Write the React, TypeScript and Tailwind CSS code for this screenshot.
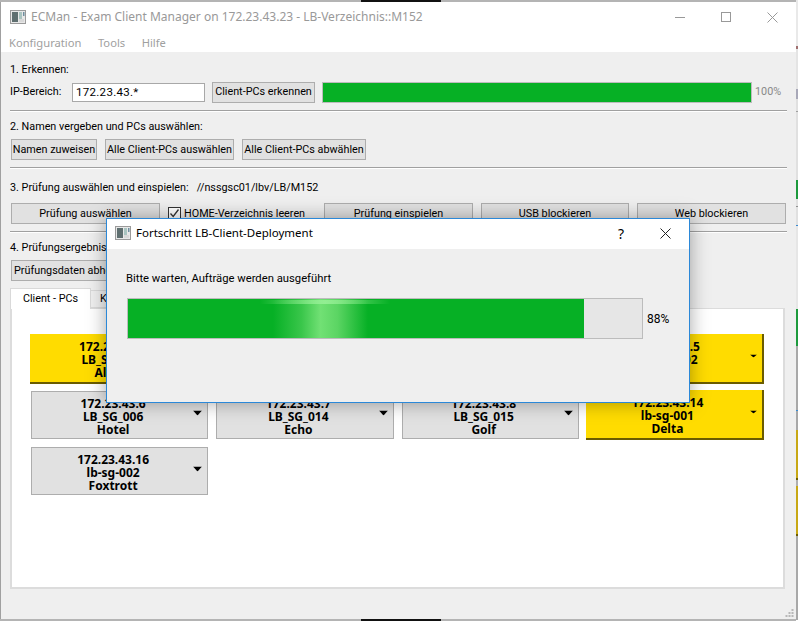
import React from "react";

const btn = "flex items-center justify-center whitespace-nowrap bg-[#e1e1e1] border border-[#adadad] pt-px text-black";
const hr = "h-[2px] border-t border-[#a0a0a0] bg-white w-[777px]";
const noto = { fontFamily: '"Noto Sans", "Open Sans", sans-serif' };

function AppIcon({ className = "" }: { className?: string }) {
  return (
    <svg width="16" height="14" viewBox="0 0 16 14" className={className}>
      <rect x="0.5" y="0.5" width="15" height="13" fill="#e8e8e8" stroke="#9a9a9a" />
      <rect x="2" y="2" width="6" height="10" fill="#5f6f70" />
      <rect x="9" y="2" width="3" height="10" fill="#a9c4c0" />
      <rect x="13" y="2" width="1.5" height="4" fill="#6f8f9f" />
      <rect x="9" y="9" width="5" height="3" fill="#d8d8d8" />
    </svg>
  );
}

function Arrow({ small }: { small?: boolean }) {
  return small ? (
    <svg width="7" height="3" viewBox="0 0 7 3" className="absolute right-[5px] top-1/2 -translate-y-1/2 mt-[-2px]">
      <path d="M0 0H7L3.5 3Z" fill="#000" />
    </svg>
  ) : (
    <svg width="9" height="5" viewBox="0 0 9 5" className="absolute right-[5px] top-1/2 -translate-y-1/2 mt-[-2px]">
      <path d="M0 0H9L4.5 5Z" fill="#000" />
    </svg>
  );
}

function Client({ lines, yellow }: { lines: string[]; yellow?: boolean }) {
  return (
    <div
      className={
        yellow
          ? "relative -mt-px -ml-px -mb-px flex items-center justify-center bg-[#ffdc00] border-r-2 border-b-2 border-[#6b5c00] pr-[13px]"
          : "relative flex items-center justify-center bg-[#e1e1e1] border border-[#adadad] pr-[13px]"
      }
    >
      <div className="pt-[2px] text-center font-bold text-[12px] leading-[13px] text-black" style={noto}>
        {lines.map((l) => (
          <div key={l}>{l}</div>
        ))}
      </div>
      <Arrow small={yellow} />
    </div>
  );
}

const strip: [string, string][] = [
  ["h-[46px]", "bg-[#e9e9e9]"],
  ["h-[3px]", "bg-[#a07070]"],
  ["h-[40px]", "bg-[#e4e4e4]"],
  ["h-[10px]", "bg-[#a8a8b8]"],
  ["h-[12px]", "bg-[#e0e0e0]"],
  ["h-[1px]", "bg-[#a0a0a0]"],
  ["h-[68px]", "bg-[#e0e0e0]"],
  ["h-[19px]", "bg-[#1c9a3c]"],
  ["h-[7px]", "bg-[#e0e0e0]"],
  ["h-[1px]", "bg-[#909090]"],
  ["h-[18px]", "bg-[#e0e0e0]"],
  ["h-[1px]", "bg-[#3a8ad0]"],
  ["h-[83px]", "bg-[#e6e6e6]"],
  ["h-[37px]", "bg-[#1c9a3c]"],
  ["h-[64px]", "bg-[#a8a8a8]"],
  ["h-[1px]", "bg-[#3a8ad0]"],
  ["h-[19px]", "bg-[#a8a8a8]"],
  ["h-[48px]", "bg-[#c8a814]"],
  ["h-[2px]", "bg-[#6b5c00]"],
  ["h-[6px]", "bg-[#b0b0b0]"],
  ["h-[48px]", "bg-[#c8a814]"],
  ["h-[2px]", "bg-[#6b5c00]"],
  ["h-[84px]", "bg-[#a8a8a8]"],
];

function Edge() {
  return (
    <div className="flex h-[2px] w-full shrink-0">
      <div className="w-[361px] bg-[#b4b4b4]" />
      <div className="w-[80px] bg-[#111111]" />
      <div className="flex-1 bg-[#b4b4b4]" />
    </div>
  );
}

export default function App() {
  return (
    <div
      className="relative w-[798px] h-[621px] flex overflow-hidden bg-white text-[10.8px] text-black"
      style={{ fontFamily: 'Roboto, "Noto Sans", sans-serif' }}
    >
      <div className="w-[796px] h-full flex flex-col shrink-0">
        <Edge />
        <div className="flex-1 min-h-0 flex flex-col border-l border-[#a0a0a0]">
          {/* title bar */}
          <div className="bg-white h-[50px] shrink-0 flex flex-col">
            <div className="flex items-center h-[30px] pl-[9px]">
              <AppIcon />
              <span className="ml-[5px] text-[12px] text-[#999999] whitespace-nowrap" style={noto}>
                ECMan - Exam Client Manager on 172.23.43.23 - LB-Verzeichnis::M152
              </span>
              <div className="ml-auto flex items-center pr-[18px] gap-[35px]">
                <svg width="11" height="11" viewBox="0 0 11 11"><path d="M0 5.5H10" stroke="#999" /></svg>
                <svg width="11" height="11" viewBox="0 0 11 11"><rect x="0.5" y="0.5" width="9" height="9" fill="none" stroke="#999" /></svg>
                <svg width="11" height="11" viewBox="0 0 11 11"><path d="M0.5 0.5L10.5 10.5M10.5 0.5L0.5 10.5" stroke="#999" /></svg>
              </div>
            </div>
            <div className="flex items-center h-[18px] mt-[2px] pl-[8px] gap-[16.5px] text-[11.2px] text-[#a0a0a0]" style={noto}>
              <span>Konfiguration</span>
              <span>Tools</span>
              <span>Hilfe</span>
            </div>
          </div>

          {/* content */}
          <div className="flex-1 min-h-0 bg-[#efefef] pl-[9px] flex flex-col">
            <div className="mt-[9px] h-[16px] leading-[18px]">1. Erkennen:</div>
            <div className="mt-[5px] h-[20px] flex items-center">
              <span className="w-[62px] pt-px">IP-Bereich:</span>
              <div className="w-[133px] h-[19px] bg-white border border-[#a8a8a8] pl-[3px] leading-[17px] text-[11.5px] tracking-[0.3px]">172.23.43.*</div>
              <div className={`${btn} ml-[7px] w-[103px] h-[21px]`}>Client-PCs erkennen</div>
              <div className="ml-[7px] w-[430px] h-[21px] border border-[#bcbcbc] bg-[#06b025]" />
              <span className="ml-[3px] pt-px text-[#888888]">100%</span>
            </div>
            <div className={`mt-[8px] ${hr}`} />
            <div className="mt-[6px] h-[16px] leading-[18px]">2. Namen vergeben und PCs auswählen:</div>
            <div className="mt-[5px] h-[21px] flex pl-px">
              <div className={`${btn} w-[86px]`}>Namen zuweisen</div>
              <div className={`${btn} ml-[8px] w-[129px]`}>Alle Client-PCs auswählen</div>
              <div className={`${btn} ml-[8px] w-[124px]`}>Alle Client-PCs abwählen</div>
            </div>
            <div className={`mt-[7px] ${hr}`} />
            <div className="mt-[10px] h-[16px] leading-[18px] flex">
              <span>3. Prüfung auswählen und einspielen:</span>
              <span className="ml-[8px]">//nssgsc01/lbv/LB/M152</span>
            </div>
            <div className="mt-[8px] h-[21px] flex pl-px items-center">
              <div className={`${btn} w-[149px] h-full`}>Prüfung auswählen</div>
              <div className="ml-[8px] w-[13px] h-[13px] bg-white border border-[#333333] flex items-center justify-center">
                <svg width="11" height="11" viewBox="0 0 11 11"><path d="M1.5 5.5L4.2 8.5L9.5 1.5" fill="none" stroke="#333" strokeWidth="1.3" /></svg>
              </div>
              <span className="ml-[3px] pt-px w-[140px] whitespace-nowrap">HOME-Verzeichnis leeren</span>
              <div className={`${btn} w-[149px] h-full`}>Prüfung einspielen</div>
              <div className={`${btn} ml-[8px] w-[148px] h-full`}>USB blockieren</div>
              <div className={`${btn} ml-[8px] w-[149px] h-full`}>Web blockieren</div>
            </div>
            <div className={`mt-[7px] ${hr}`} />
            <div className="mt-[6px] h-[16px] leading-[18px]">4. Prüfungsergebnisse</div>
            <div className="mt-[5px] h-[21px] flex pl-px">
              <div className={`${btn} w-[140px] justify-start pl-[2px]`}>Prüfungsdaten abholen</div>
            </div>

            {/* tabs */}
            <div className="mt-[7px] h-[21px] flex shrink-0 relative z-10">
              <div className="w-[81px] h-[21px] bg-white border border-[#d9d9d9] border-b-0 flex items-center justify-center">Client - PCs</div>
              <div className="mt-[2px] w-[60px] h-[18px] bg-[#efefef] border border-[#d9d9d9] border-l-0 pl-[9px] leading-[16px]">K</div>
            </div>
            <div className="-mt-px w-[775px] h-[281px] bg-white border-2 border-[#dcdcdc] border-t border-r-2 pt-[26px] pl-[19px]">
              <div className="grid grid-cols-4 gap-x-[8px] gap-y-[8px] w-[733px] grid-rows-[48px_48px_48px]">
                <Client yellow lines={["172.23.43.1", "LB_SG_001", "Alpha"]} />
                <Client lines={["172.23.43.2", "LB_SG_003", "India"]} />
                <Client lines={["172.23.43.3", "LB_SG_004", "Juliet"]} />
                <Client yellow lines={["172.23.43.5", "LB_SG_002", "Bravo"]} />
                <Client lines={["172.23.43.6", "LB_SG_006", "Hotel"]} />
                <Client lines={["172.23.43.7", "LB_SG_014", "Echo"]} />
                <Client lines={["172.23.43.8", "LB_SG_015", "Golf"]} />
                <Client yellow lines={["172.23.43.14", "lb-sg-001", "Delta"]} />
                <Client lines={["172.23.43.16", "lb-sg-002", "Foxtrott"]} />
              </div>
            </div>
            <div className="flex-1 flex justify-end items-end pr-[2px] pb-[1px]">
              <svg width="9" height="9" viewBox="0 0 9 9" fill="#b8b8b8">
                <rect x="6.5" y="0" width="2" height="2" />
                <rect x="3.5" y="3" width="2" height="2" />
                <rect x="6.5" y="3" width="2" height="2" />
                <rect x="0.5" y="6" width="2" height="2" />
                <rect x="3.5" y="6" width="2" height="2" />
                <rect x="6.5" y="6" width="2" height="2" />
              </svg>
            </div>
          </div>
        </div>
        <Edge />
      </div>

      {/* right strip: windows behind */}
      <div className="w-[2px] h-full flex flex-col shrink-0">
        {strip.map(([h, c], i) => (
          <div key={i} className={`${h} ${c} shrink-0`} />
        ))}
      </div>

      {/* modal dialog */}
      <div className="absolute z-20 left-[106px] top-[218px] w-[584px] h-[185px] bg-[#efefef] border border-[#2b88d8] shadow-[0_0_18px_rgba(0,0,0,0.35)] flex flex-col">
        <div className="h-[30px] bg-white shrink-0 flex items-center pl-[8px] pb-[2px]">
          <AppIcon />
          <span className="ml-[5px] text-[11.5px] text-black whitespace-nowrap" style={noto}>Fortschritt LB-Client-Deployment</span>
          <span className="ml-auto text-[14px] text-black" style={noto}>?</span>
          <svg width="11" height="11" viewBox="0 0 11 11" className="ml-[36px] mr-[18px]">
            <path d="M0.5 0.5L10.5 10.5M10.5 0.5L0.5 10.5" stroke="#222" />
          </svg>
        </div>
        <div className="mt-[21px] ml-[19px] h-[16px] leading-[18px] text-[11.25px]">Bitte warten, Aufträge werden ausgeführt</div>
        <div className="mt-[12px] ml-[20px] flex items-center">
          <div className="w-[516px] h-[41px] border border-[#bcbcbc] bg-[#e6e6e6]">
            <div className="relative w-[456px] h-full bg-[#06b025] overflow-hidden">
              <div className="absolute top-0 bottom-0 left-[145px] w-[95px] bg-[linear-gradient(90deg,rgba(120,225,120,0)_0%,rgba(120,225,120,0.45)_30%,rgba(125,230,125,0.9)_50%,rgba(120,225,120,0.75)_68%,rgba(120,225,120,0)_100%)]" />
              <div className="absolute top-[1px] h-[4px] left-[132px] w-[130px] bg-[linear-gradient(90deg,rgba(150,240,150,0)_0%,rgba(150,240,150,0.9)_50%,rgba(150,240,150,0)_100%)]" />
            </div>
          </div>
          <span className="ml-[4px] text-[12px]">88%</span>
        </div>
      </div>
    </div>
  );
}
